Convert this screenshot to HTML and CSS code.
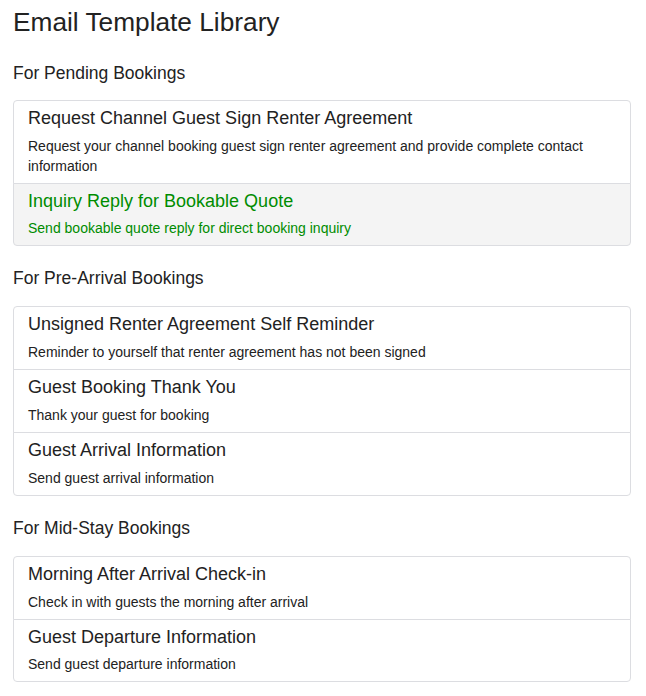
FILE: index.html
```html
<!DOCTYPE html>
<html lang="en">
<head>
    <meta charset="UTF-8">
    <meta name="viewport" content="width=device-width, initial-scale=1.0">
    <title>Email Template Library</title>
    <link rel="stylesheet" href="styles.css">
</head>
<body>
    <div class="page">
        <h1>Email Template Library</h1>

        <h4 class="section-title">For Pending Bookings</h4>
        <div class="list-group">
            <a href="#" class="list-group-item">
                <h4 class="item-heading">Request Channel Guest Sign Renter Agreement</h4>
                <p class="item-text">Request your channel booking guest sign renter agreement and provide complete contact information</p>
            </a>
            <a href="#" class="list-group-item hover">
                <h4 class="item-heading">Inquiry Reply for Bookable Quote</h4>
                <p class="item-text">Send bookable quote reply for direct booking inquiry</p>
            </a>
        </div>

        <h4 class="section-title">For Pre-Arrival Bookings</h4>
        <div class="list-group">
            <a href="#" class="list-group-item">
                <h4 class="item-heading">Unsigned Renter Agreement Self Reminder</h4>
                <p class="item-text">Reminder to yourself that renter agreement has not been signed</p>
            </a>
            <a href="#" class="list-group-item">
                <h4 class="item-heading">Guest Booking Thank You</h4>
                <p class="item-text">Thank your guest for booking</p>
            </a>
            <a href="#" class="list-group-item">
                <h4 class="item-heading">Guest Arrival Information</h4>
                <p class="item-text">Send guest arrival information</p>
            </a>
        </div>

        <h4 class="section-title">For Mid-Stay Bookings</h4>
        <div class="list-group">
            <a href="#" class="list-group-item">
                <h4 class="item-heading">Morning After Arrival Check-in</h4>
                <p class="item-text">Check in with guests the morning after arrival</p>
            </a>
            <a href="#" class="list-group-item">
                <h4 class="item-heading">Guest Departure Information</h4>
                <p class="item-text">Send guest departure information</p>
            </a>
        </div>
    </div>
</body>
</html>
```

FILE: styles.css
```css
body {
    margin: 0;
    font-family: "Liberation Sans", Arial, sans-serif;
    font-size: 14px;
    color: #333;
    background-color: #fff;
}
.page {
    padding: 8px 15px 0 13px;
}
h1 {
    margin: 0;
    font-size: 26.25px;
    font-weight: normal;
    line-height: 1.1;
    color: #222;
}
.section-title {
    margin: 26px 0 17px;
    font-size: 17.5px;
    font-weight: normal;
    line-height: 20px;
    color: #222;
}
.list-group + .section-title {
    margin-top: 22px;
    margin-bottom: 18px;
}
.list-group {
    display: flex;
    flex-direction: column;
}
.list-group-item {
    display: block;
    padding: 8px 14px 7px;
    margin-bottom: -1px;
    border: 1px solid #dcdde1;
    background-color: #fff;
    color: #222;
    text-decoration: none;
}
.list-group-item:first-child {
    border-top-left-radius: 4px;
    border-top-right-radius: 4px;
}
.list-group-item:last-child {
    margin-bottom: 0;
    border-bottom-left-radius: 4px;
    border-bottom-right-radius: 4px;
}
.list-group-item.hover {
    background-color: #f4f4f4;
    color: #008c00;
}
.item-heading {
    margin: 0 0 7px;
    font-size: 18px;
    font-weight: normal;
    line-height: 1.1;
}
.item-text {
    margin: 0;
    font-size: 14px;
    line-height: 20px;
}
```
